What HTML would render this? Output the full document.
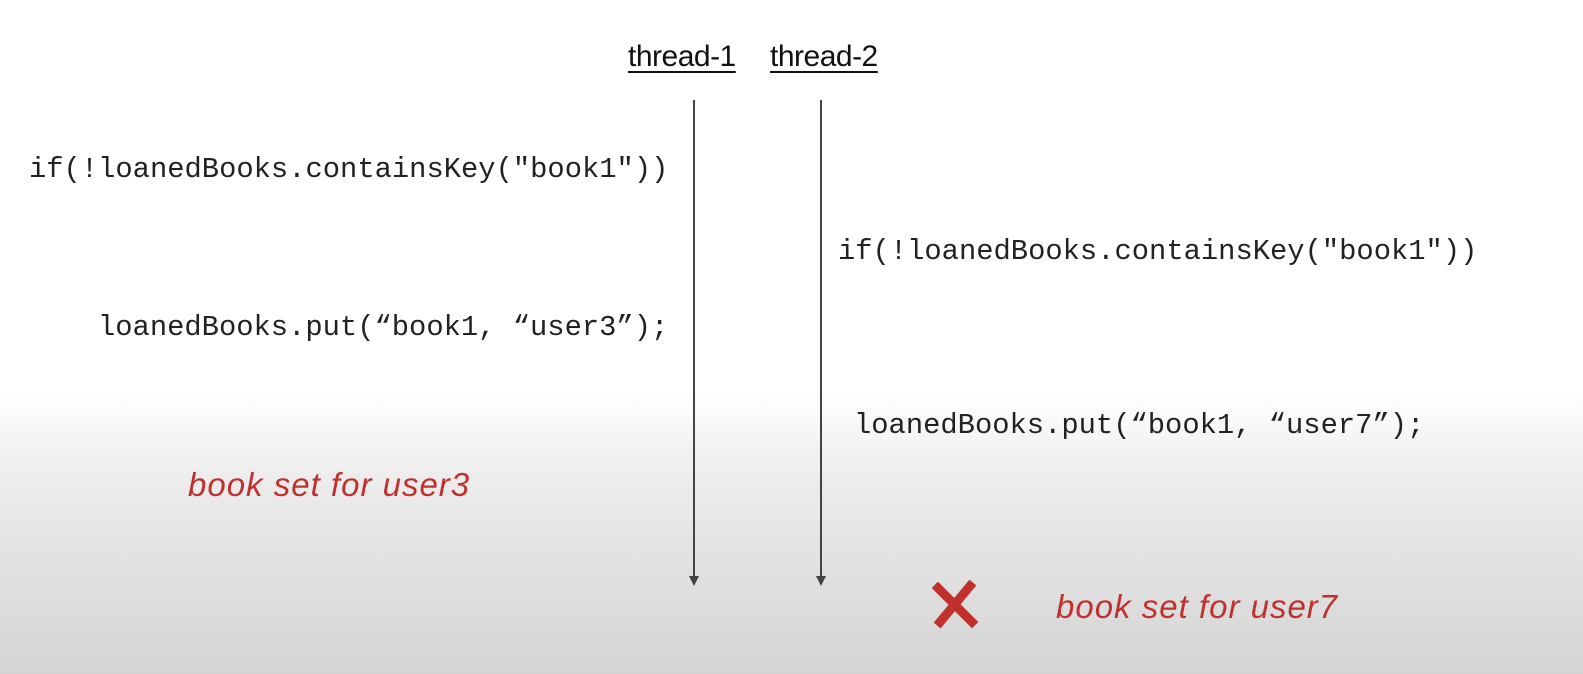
<!DOCTYPE html>
<html><head><style>
html,body{margin:0;padding:0}
body{width:1583px;height:674px;position:relative;overflow:hidden;
background:linear-gradient(to bottom,#fff 0px,#fff 390px,#ececec 480px,#d4d4d4 674px);
font-family:"Liberation Mono",monospace;color:#222}
.t{position:absolute;font-family:"Liberation Sans",sans-serif;font-size:30px;text-decoration:underline;text-decoration-thickness:2px;text-underline-offset:5px;color:#111;letter-spacing:-0.5px;line-height:1}
.c{position:absolute;font-size:28.8px;white-space:pre;color:#222;line-height:1}
.h{position:absolute;font-family:"Liberation Sans",sans-serif;font-style:italic;font-size:33px;color:#c0312d;white-space:pre;line-height:1;letter-spacing:1px}
.ln{position:absolute;width:2px;background:#444}
.ar{position:absolute;width:0;height:0;border-left:5px solid transparent;border-right:5px solid transparent;border-top:10px solid #444}
</style></head><body>
<div class="t" style="left:628px;top:42px">thread-1</div>
<div class="t" style="left:770px;top:42px">thread-2</div>
<div class="ln" style="left:693px;top:100px;height:478px"></div>
<div class="ar" style="left:689px;top:576px"></div>
<div class="ln" style="left:820px;top:100px;height:478px"></div>
<div class="ar" style="left:816px;top:576px"></div>
<div class="c" style="left:29px;top:156px">if(!loanedBooks.containsKey("book1"))</div>
<div class="c" style="left:838px;top:238px">if(!loanedBooks.containsKey("book1"))</div>
<div class="c" style="left:98px;top:314px">loanedBooks.put(“book1, “user3”);</div>
<div class="c" style="left:854px;top:412px">loanedBooks.put(“book1, “user7”);</div>
<div class="h" style="left:188px;top:468px">book set for user3</div>
<div class="h" style="left:1056px;top:590px">book set for user7</div>
<svg style="position:absolute;left:930px;top:580px" width="50" height="50" viewBox="0 0 50 50">
<path d="M8 8 L42 42 M40 6 L10 42" stroke="#c0312d" stroke-width="9" stroke-linecap="square" fill="none"/>
</svg>
</body></html>
